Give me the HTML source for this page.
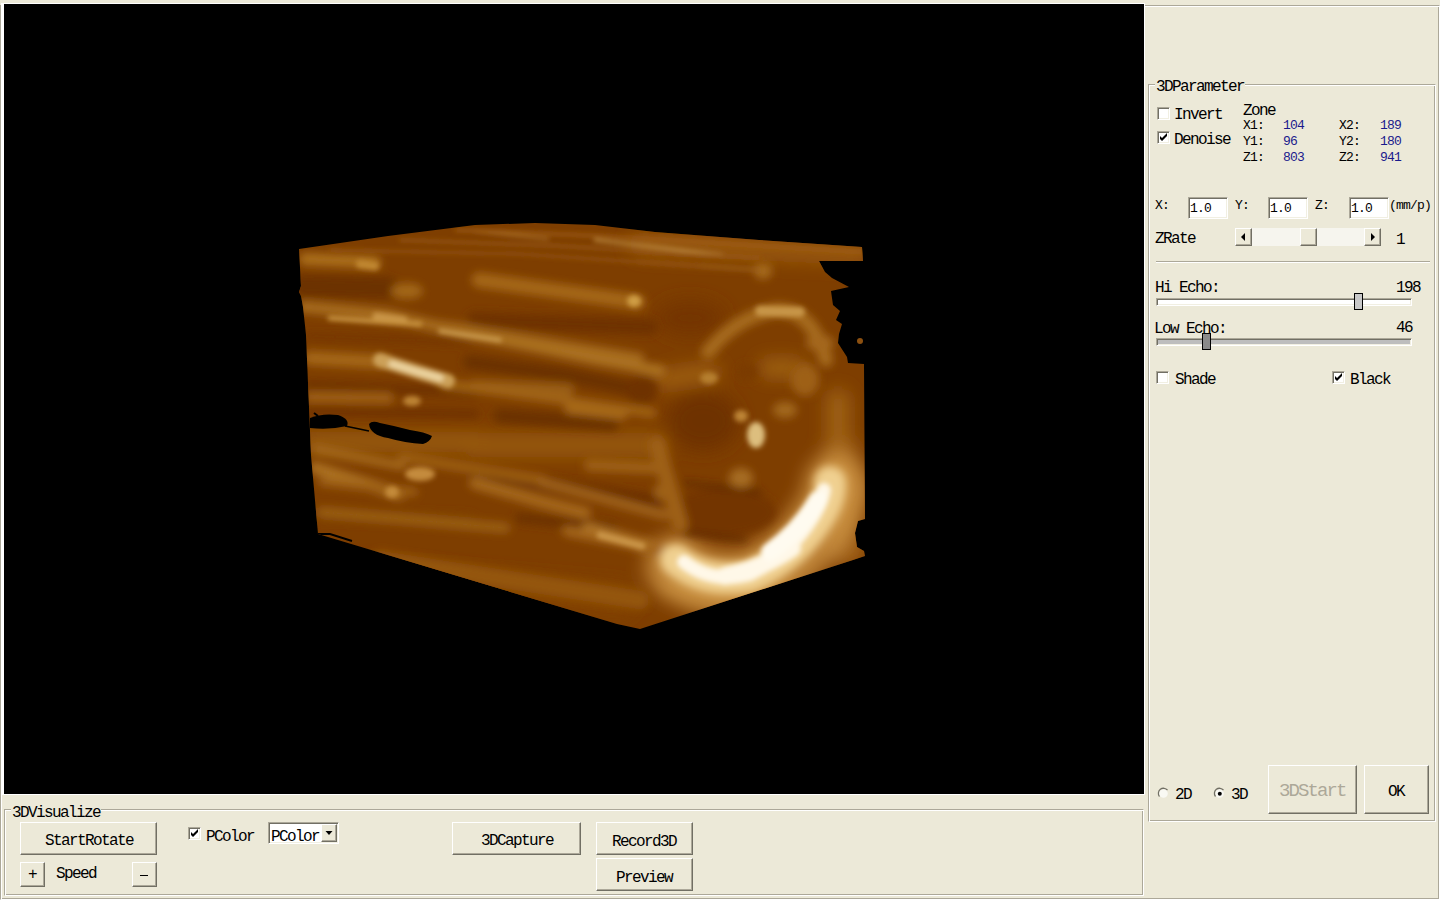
<!DOCTYPE html>
<html><head><meta charset="utf-8">
<style>
*{margin:0;padding:0;box-sizing:border-box}
html,body{width:1440px;height:900px;overflow:hidden;background:#ECE9D8;position:relative}
.a{position:absolute}
.etch{position:absolute;border:1px solid;border-color:#ACA899 #fff #fff #ACA899;box-shadow:inset 1px 1px #fff,inset -1px -1px #ACA899}
.t{position:absolute;font-family:"Liberation Mono",monospace;font-size:16px;letter-spacing:-1.6px;line-height:16px;color:#000;white-space:pre}
.s{font-size:13px;letter-spacing:-0.8px;line-height:13px}
.gl{background:#ECE9D8}
.btn{position:absolute;border:1px solid;border-color:#fff #716F64 #716F64 #fff;box-shadow:inset -1px -1px #ACA899}
.chk{position:absolute;width:13px;height:13px;background:#fff;border:1px solid;border-color:#ACA899 #fff #fff #ACA899;box-shadow:inset 1px 1px #716F64,inset -1px -1px #F1EFE2}
.edit{position:absolute;background:#fff;border:1px solid;border-color:#ACA899 #fff #fff #ACA899;box-shadow:inset 1px 1px #716F64,inset -1px -1px #F1EFE2}
.blue{color:#1A1A8C}
</style></head><body>
<!-- outer etched frame -->
<div class="etch" style="left:0;top:5px;width:1440px;height:895px"></div>
<!-- black view -->
<div class="a" style="left:1px;top:3px;width:1144px;height:792px;background:#fff"></div>
<div class="a" id="view" style="left:4px;top:4px;width:1140px;height:790px;background:#000;overflow:hidden"></div>

<!--CUBE--><svg class="a" style="left:0;top:0" width="1440" height="900" viewBox="0 0 1440 900">
<defs>
<clipPath id="cc"><path d="M299,249 L388,236 L475,225 L535,223 L595,225 L655,232 L759,240 L862,247 L863,261 L819,261 L825,272 L832,278 L849,287 L831,291 L833,305 L840,311 L836,320 L842,324 L839,334 L838,343 L847,357 L848,363 L864,364 L865,519 L858,521 L855,533 L857,547 L864,551 L865,556 L853,560 L640,629 L617,624 L318,534 L311,455 L306,335 L303,307 L301,296 L299,292 L301,286 L299,249 Z"/></clipPath>
<filter id="b10" x="-30%" y="-30%" width="160%" height="160%"><feGaussianBlur stdDeviation="9"/></filter>
<filter id="b6" x="-30%" y="-30%" width="160%" height="160%"><feGaussianBlur stdDeviation="4.5"/></filter>
<filter id="b3" x="-30%" y="-30%" width="160%" height="160%"><feGaussianBlur stdDeviation="2.5"/></filter>
</defs>
<g clip-path="url(#cc)">
<rect x="290" y="215" width="590" height="420" fill="#7E3E00"/>
<g filter="url(#b10)" stroke-linecap="round" fill="none">
  <path d="M640,244 L860,254" stroke="#99580D" stroke-width="22"/>
  <path d="M475,445 L655,445" stroke="#96580E" stroke-width="24"/>
  <path d="M308,442 L475,442" stroke="#995C10" stroke-width="20"/>
  <path d="M840,450 L848,550" stroke="#A06115" stroke-width="34"/>
  <ellipse cx="725" cy="590" rx="70" ry="16" fill="#A66C20"/>
  <path d="M330,575 L620,600" stroke="#834300" stroke-width="30"/>
  <ellipse cx="703" cy="421" rx="36" ry="30" fill="#6E3200"/>
  <ellipse cx="690" cy="318" rx="35" ry="18" fill="#743600"/>
  <path d="M660,380 L712,372" stroke="#A36418" stroke-width="16"/>
  <path d="M767,368 L797,368" stroke="#A06316" stroke-width="18"/>
  <path d="M838,400 L838,440" stroke="#A06418" stroke-width="22"/>
  <path d="M677,566 Q705,589 748,582 Q800,562 830,507 Q840,490 836,485" stroke="#D8A050" stroke-width="64" opacity=".7"/>
</g>
<g filter="url(#b6)" stroke-linecap="round" fill="none">
  <path d="M303,286 L388,288" stroke="#6C3000" stroke-width="22"/>
  <path d="M475,320 L650,327" stroke="#6E3200" stroke-width="16"/>
  <path d="M470,362 L560,374 L640,390" stroke="#6A3000" stroke-width="14"/>
  <path d="M308,336 L470,342" stroke="#743400" stroke-width="6"/>
  <path d="M308,386 L475,392" stroke="#6E3200" stroke-width="10"/>
  <path d="M308,411 L475,414" stroke="#703200" stroke-width="9"/>
  <path d="M500,416 L612,424" stroke="#6A3000" stroke-width="14"/>
  <ellipse cx="642" cy="390" rx="16" ry="14" fill="#6E3200"/>
  <path d="M475,472 L560,486 L655,502" stroke="#6A2E00" stroke-width="14"/>
  <path d="M520,518 L612,528" stroke="#6C3000" stroke-width="10"/>
  <path d="M315,515 L470,520" stroke="#7E4000" stroke-width="12"/>
  <ellipse cx="748" cy="372" rx="10" ry="9" fill="#7A3A00"/>
  <ellipse cx="805" cy="380" rx="14" ry="16" fill="#9E6016"/>
  <ellipse cx="722" cy="512" rx="54" ry="24" fill="#733400"/><path d="M685,483 L760,492" stroke="#5A2600" stroke-width="4"/><path d="M685,533 L745,540" stroke="#5A2600" stroke-width="4"/>
  <path d="M305,259 L375,262" stroke="#AC701E" stroke-width="12"/>
  <ellipse cx="407" cy="291" rx="16" ry="8" fill="#A26618"/>
  <path d="M304,307 L388,315 L475,335 L542,348 L595,359 L635,366 L660,371" stroke="#AC7224" stroke-width="11"/>
  <path d="M479,280 L638,302" stroke="#A46618" stroke-width="15"/>
  <path d="M310,358 L382,362" stroke="#A46618" stroke-width="14"/>
  <path d="M310,397 L388,398" stroke="#9E5F12" stroke-width="11"/>
  <path d="M475,386 L568,390" stroke="#9A5E12" stroke-width="12"/>
  <path d="M570,408 L622,414" stroke="#AA6C1E" stroke-width="11"/>
  <path d="M315,468 L399,494" stroke="#AC7124" stroke-width="12"/>
  <path d="M475,483 L542,502 L585,513" stroke="#A5681B" stroke-width="12"/>
  <path d="M588,530 L650,547" stroke="#B2782A" stroke-width="14"/>
  <path d="M590,465 L655,468" stroke="#9E6015" stroke-width="12"/>
  <path d="M708,352 Q735,318 775,310 Q812,308 826,360" stroke="#A66A1E" stroke-width="14"/>
  <ellipse cx="763" cy="271" rx="9" ry="8" fill="#A66B1E"/>
  <ellipse cx="820" cy="343" rx="14" ry="8" fill="#A4681B"/>
  <ellipse cx="785" cy="410" rx="12" ry="8" fill="#A2681B"/>
  <ellipse cx="741" cy="478" rx="12" ry="10" fill="#A66C21"/>
  <ellipse cx="662" cy="492" rx="8" ry="8" fill="#9F641B"/>
  <ellipse cx="675" cy="514" rx="8" ry="7" fill="#9F641B"/>
  
  <path d="M444,384 L550,398 L652,413" stroke="#A26518" stroke-width="9"/>
  <path d="M316,449 L402,466" stroke="#A66A1B" stroke-width="8"/>
  <path d="M402,457 L542,480" stroke="#9E6015" stroke-width="9"/>
  <path d="M322,482 L414,492" stroke="#9E6015" stroke-width="8"/>
  <path d="M542,482 L664,515" stroke="#A2651A" stroke-width="9"/>
  <path d="M322,512 L505,528" stroke="#9A5E12" stroke-width="10"/>
  <path d="M567,531 L676,553" stroke="#A4661B" stroke-width="10"/>
  <path d="M380,560 L640,600" stroke="#94560E" stroke-width="18"/>
  <path d="M657,445 L680,525" stroke="#9E6016" stroke-width="16"/>
  <path d="M310,309 L457,327 L640,357" stroke="#A66B1E" stroke-width="8"/>
<path d="M676,560 Q706,584 750,576 Q796,557 822,512 Q832,494 830,482" stroke="#F0D090" stroke-width="32"/>
</g>
<g filter="url(#b3)" stroke-linecap="round" fill="none">
  <path d="M360,264 L375,266" stroke="#C18832" stroke-width="8"/>
  <path d="M376,316 L404,320" stroke="#CB9648" stroke-width="7"/>
  <ellipse cx="634" cy="301" rx="7" ry="6" fill="#CF9D44"/>
  <path d="M380,360 L415,371 L448,381" stroke="#CCA058" stroke-width="14"/>
  <path d="M392,364 L418,372 L440,378" stroke="#ECD4A0" stroke-width="7"/>
  <ellipse cx="412" cy="401" rx="9" ry="5" fill="#BD8436"/>
  <ellipse cx="392" cy="492" rx="7" ry="6" fill="#C48B3A"/>
  <ellipse cx="420" cy="474" rx="15" ry="7" fill="#C48B3D"/>
  <path d="M600,535 L642,546" stroke="#CB9648" stroke-width="7"/>
  <path d="M760,311 L800,312" stroke="#C89648" stroke-width="10"/>
  <ellipse cx="709" cy="378" rx="9" ry="6" fill="#B67F2F"/>
  <ellipse cx="756" cy="435" rx="9" ry="13" fill="#DDBE7E"/>
  <ellipse cx="741" cy="416" rx="7" ry="6" fill="#BD8436"/>
  <path d="M475,231 L548,239" stroke="#A06624" stroke-width="3"/>
  <path d="M595,240 L655,247 L722,255" stroke="#BD8B41" stroke-width="3"/>
  <path d="M640,262 L760,270" stroke="#9D601D" stroke-width="3"/>
  
  <path d="M456,230 L600,236 L862,252" stroke="#A46219" stroke-width="2.5"/>
  <path d="M400,240 L560,246 L760,258" stroke="#9B5B16" stroke-width="2.5"/>
  <path d="M330,250 L520,254 L700,266" stroke="#975712" stroke-width="2.5"/>
  <path d="M330,318 L420,324" stroke="#C89341" stroke-width="5"/>
  <path d="M440,331 L500,340" stroke="#CFA156" stroke-width="4"/>
<path d="M684,562 Q712,584 750,574 Q790,554 812,518 Q822,502 824,490" stroke="#FFF8E8" stroke-width="14"/><path d="M725,576 Q760,570 792,548" stroke="#FFF8E8" stroke-width="18"/><path d="M770,552 Q800,530 818,500" stroke="#FFFBF0" stroke-width="18"/>
</g>
<path d="M310,418 Q322,413 338,415 Q350,419 347,426 Q330,430 310,428 Z" fill="#000"/>
<path d="M314,413 L318,416" stroke="#000" stroke-width="2"/>
<path d="M345,426 L369,431" stroke="#000" stroke-width="1.5"/>
<path d="M369,424 Q372,420 380,423 Q395,426 410,430 Q425,432 432,436 Q430,442 423,444 Q405,443 388,438 Q370,435 369,424 Z" fill="#000"/>
<path d="M318,534 L330,534 L352,541" stroke="#000" stroke-width="2" fill="none"/>
</g>
<circle cx="860" cy="341" r="3" fill="#8C5010"/>
</svg>
<!--/CUBE-->
<!-- right group box -->
<div class="etch" style="left:1148px;top:84px;width:288px;height:738px"></div>
<div class="t gl" style="left:1155px;top:79px;padding:0 1px">3DParameter</div>

<!-- bottom group box -->
<div class="etch" style="left:4px;top:809px;width:1140px;height:87px"></div>
<div class="t gl" style="left:11px;top:805px;padding:0 1px">3DVisualize</div>


<!-- right panel controls -->
<div class="chk" style="left:1157px;top:107px"></div>
<div class="t" style="left:1174px;top:107px">Invert</div>
<div class="chk" style="left:1157px;top:131px"></div>
<svg class="a" style="left:1157px;top:131px" width="13" height="13"><path d="M3 5 L5 7 L10 2 L10 5 L5 10 L3 8 Z" fill="#000"/></svg>
<div class="t" style="left:1174px;top:132px">Denoise</div>
<div class="t" style="left:1243px;top:103px">Zone</div>
<div class="t s" style="left:1243px;top:119px">X1:</div>
<div class="t s blue" style="left:1283px;top:119px">104</div>
<div class="t s" style="left:1243px;top:135px">Y1:</div>
<div class="t s blue" style="left:1283px;top:135px">96</div>
<div class="t s" style="left:1243px;top:151px">Z1:</div>
<div class="t s blue" style="left:1283px;top:151px">803</div>
<div class="t s" style="left:1339px;top:119px">X2:</div>
<div class="t s blue" style="left:1380px;top:119px">189</div>
<div class="t s" style="left:1339px;top:135px">Y2:</div>
<div class="t s blue" style="left:1380px;top:135px">180</div>
<div class="t s" style="left:1339px;top:151px">Z2:</div>
<div class="t s blue" style="left:1380px;top:151px">941</div>

<div class="t s" style="left:1155px;top:199px">X:</div>
<div class="edit" style="left:1188px;top:197px;width:40px;height:22px"></div>
<div class="t s" style="left:1190px;top:202px">1.0</div>
<div class="t s" style="left:1235px;top:199px">Y:</div>
<div class="edit" style="left:1268px;top:197px;width:40px;height:22px"></div>
<div class="t s" style="left:1270px;top:202px">1.0</div>
<div class="t s" style="left:1315px;top:199px">Z:</div>
<div class="edit" style="left:1349px;top:197px;width:40px;height:22px"></div>
<div class="t s" style="left:1351px;top:202px">1.0</div>
<div class="t s" style="left:1389px;top:199px">(mm/p)</div>

<div class="t" style="left:1155px;top:231px">ZRate</div>
<div class="a" style="left:1235px;top:228px;width:146px;height:18px;background:#F6F5EE"></div>
<div class="btn" style="left:1235px;top:228px;width:17px;height:18px;background:#ECE9D8"></div>
<svg class="a" style="left:1235px;top:228px" width="17" height="18"><path d="M6 9 L10 5 L10 13 Z" fill="#000"/></svg>
<div class="btn" style="left:1300px;top:228px;width:17px;height:18px;background:#ECE9D8"></div>
<div class="btn" style="left:1364px;top:228px;width:17px;height:18px;background:#ECE9D8"></div>
<svg class="a" style="left:1364px;top:228px" width="17" height="18"><path d="M11 9 L7 5 L7 13 Z" fill="#000"/></svg>
<div class="t" style="left:1396px;top:232px">1</div>

<div class="a" style="left:1156px;top:261px;width:274px;height:1px;background:#ACA899"></div>
<div class="a" style="left:1156px;top:262px;width:274px;height:1px;background:#fff"></div>

<div class="t" style="left:1155px;top:280px">Hi Echo:</div>
<div class="t" style="left:1396px;top:280px">198</div>
<div class="a" style="left:1156px;top:298px;width:256px;height:8px;background:#fff;border:1px solid;border-color:#ACA899 #fff #fff #ACA899;box-shadow:inset 1px 1px #716F64,inset -1px -1px #F1EFE2"></div>
<div class="a" style="left:1354px;top:293px;width:9px;height:17px;background:#C8C8C8;border:1px solid #000"></div>

<div class="t" style="left:1154px;top:321px">Low Echo:</div>
<div class="t" style="left:1396px;top:320px">46</div>
<div class="a" style="left:1156px;top:338px;width:256px;height:8px;background:#BDBDBD;border:1px solid;border-color:#ACA899 #fff #fff #ACA899;box-shadow:inset 1px 1px #716F64,inset -1px -1px #F1EFE2"></div>
<div class="a" style="left:1202px;top:333px;width:9px;height:17px;background:#8A8A8A;border:1px solid #000"></div>

<div class="chk" style="left:1156px;top:371px"></div>
<div class="t" style="left:1175px;top:372px">Shade</div>
<div class="chk" style="left:1332px;top:371px"></div>
<svg class="a" style="left:1332px;top:371px" width="13" height="13"><path d="M3 5 L5 7 L10 2 L10 5 L5 10 L3 8 Z" fill="#000"/></svg>
<div class="t" style="left:1350px;top:372px">Black</div>

<svg class="a" style="left:1157px;top:787px" width="13" height="13"><path d="M10.5 3.2 A5 5 0 0 0 2.5 9.5" stroke="#716F64" stroke-width="1.3" fill="none"/><circle cx="6.5" cy="6.5" r="4.3" fill="#fff" opacity=".7"/></svg>
<div class="t" style="left:1175px;top:787px">2D</div>
<svg class="a" style="left:1213px;top:787px" width="13" height="13"><circle cx="6.5" cy="6.5" r="4.3" fill="#fff" opacity=".7"/><path d="M10.5 3.2 A5 5 0 0 0 2.5 9.5" stroke="#716F64" stroke-width="1.3" fill="none"/><circle cx="6.8" cy="6.8" r="2" fill="#000"/></svg>
<div class="t" style="left:1231px;top:787px">3D</div>

<div class="btn" style="left:1268px;top:765px;width:89px;height:49px"></div>
<div class="t" style="left:1279px;top:782px;font-size:19px;letter-spacing:-1.9px;line-height:19px;color:#ACA899">3DStart</div>
<div class="btn" style="left:1364px;top:765px;width:65px;height:49px"></div>
<div class="t" style="left:1388px;top:784px">OK</div>

<!-- bottom controls -->
<div class="btn" style="left:20px;top:822px;width:137px;height:33px"></div>
<div class="t" style="left:45px;top:833px">StartRotate</div>
<div class="btn" style="left:20px;top:862px;width:25px;height:25px"></div>
<div class="t" style="left:28px;top:867px">+</div>
<div class="t" style="left:56px;top:866px">Speed</div>
<div class="btn" style="left:132px;top:862px;width:25px;height:25px"></div>
<div class="a" style="left:140px;top:875px;width:8px;height:1px;background:#000"></div>

<div class="chk" style="left:188px;top:827px"></div>
<svg class="a" style="left:188px;top:827px" width="13" height="13"><path d="M3 5 L5 7 L10 2 L10 5 L5 10 L3 8 Z" fill="#000"/></svg>
<div class="t" style="left:206px;top:829px">PColor</div>
<div class="edit" style="left:268px;top:822px;width:71px;height:22px"></div>
<div class="t" style="left:271px;top:829px">PColor</div>
<div class="btn" style="left:321px;top:824px;width:16px;height:18px;background:#ECE9D8"></div>
<svg class="a" style="left:321px;top:824px" width="16" height="18"><path d="M4.5 7 L11.5 7 L8 11 Z" fill="#000"/></svg>

<div class="btn" style="left:452px;top:822px;width:129px;height:33px"></div>
<div class="t" style="left:481px;top:833px">3DCapture</div>
<div class="btn" style="left:596px;top:822px;width:97px;height:33px"></div>
<div class="t" style="left:612px;top:834px">Record3D</div>
<div class="btn" style="left:596px;top:858px;width:97px;height:33px"></div>
<div class="t" style="left:616px;top:870px">Preview</div>
</body></html>
